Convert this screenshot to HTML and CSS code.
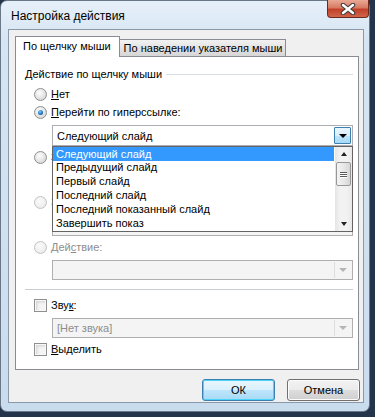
FILE: index.html
```html
<!DOCTYPE html>
<html lang="ru">
<head>
    <meta charset="UTF-8">
    <title>Настройка действия</title>
    <link rel="stylesheet" href="styles.css">
</head>
<body>
    <div class="window">
        <div class="titlebar">
            <span class="title">Настройка действия</span>
            <div class="close">
                <svg width="16" height="12" viewBox="0 0 16 12">
                    <path d="M3 2 L13 10 M13 2 L3 10" stroke="#3a3a3a" stroke-width="4.5" stroke-linecap="round"/>
                    <path d="M3 2 L13 10 M13 2 L3 10" stroke="#fff" stroke-width="2.5" stroke-linecap="round"/>
                </svg>
            </div>
        </div>
        <div class="client">
            <div class="tabs">
                <div class="tab active">По щелчку мыши</div>
                <div class="tab">По наведении указателя мыши</div>
            </div>
            <div class="panel">
                <div class="group-title"><span>Действие по щелчку мыши</span></div>

                <div class="row"><span class="radio"></span><span><u>Н</u>ет</span></div>
                <div class="row"><span class="radio checked"></span><span><u>П</u>ерейти по гиперссылке:</span></div>
                <div class="combo-wrap">
                    <div class="combo focus">
                        <span class="combo-text">Следующий слайд</span>
                        <span class="combo-btn"><span class="arrow"></span></span>
                    </div>
                    <div class="dropdown">
                        <ul class="items">
                            <li class="selected">Следующий слайд</li>
                            <li>Предыдущий слайд</li>
                            <li>Первый слайд</li>
                            <li>Последний слайд</li>
                            <li>Последний показанный слайд</li>
                            <li>Завершить показ</li>
                        </ul>
                        <div class="scrollbar">
                            <span class="sb-up"></span>
                            <span class="sb-thumb"><i></i><i></i><i></i></span>
                            <span class="sb-down"></span>
                        </div>
                    </div>
                </div>

                <div class="row next"><span class="radio"></span><span>З</span></div>
                <div class="combo disabled"><span class="combo-text"></span></div>
                <div class="row next"><span class="radio off"></span><span class="dim">З</span></div>
                <div class="combo disabled"><span class="combo-text"></span></div>

                <div class="row next"><span class="radio off"></span><span class="dim">Дей<u>с</u>твие:</span></div>
                <div class="combo disabled short">
                    <span class="combo-text"></span>
                    <span class="combo-btn"><span class="arrow"></span></span>
                </div>

                <div class="separator"></div>

                <div class="row check-row"><span class="check"></span><span>Зву<u>к</u>:</span></div>
                <div class="combo disabled short">
                    <span class="combo-text">[Нет звука]</span>
                    <span class="combo-btn"><span class="arrow"></span></span>
                </div>
                <div class="row next"><span class="check"></span><span><u>В</u>ыделить</span></div>
            </div>
            <div class="buttons">
                <div class="btn default">ОК</div>
                <div class="btn">Отмена</div>
            </div>
        </div>
    </div>
</body>
</html>
```

FILE: styles.css
```css
body {
    margin: 0;
    background: #24344a;
    font-family: "Liberation Sans", Arial, sans-serif;
    font-size: 11px;
    color: #000;
}
.window {
    width: 370px;
    height: 412px;
    box-sizing: border-box;
    border: 1px solid #6a7786;
    border-radius: 7px;
    background: linear-gradient(180deg, #e6f0f9 0, #d6e5f3 40px, #c9dcee 100%);
    padding: 0 5px 8px 7px;
    display: flex;
    flex-direction: column;
}
.titlebar {
    height: 28px;
    display: flex;
    justify-content: space-between;
    align-items: flex-start;
}
.title {
    padding: 8px 0 0 3px;
    font-size: 12px;
    color: #000;
}
.close {
    width: 42px;
    height: 18px;
    margin: -1px -5px 0 0;
    box-sizing: border-box;
    border: 1px solid #6b2a20;
    border-top: none;
    border-radius: 0 0 4px 4px;
    background: linear-gradient(180deg, #e9a996 0, #d77b63 45%, #c2402a 55%, #d2664a 100%);
    display: flex;
    align-items: center;
    justify-content: center;
}
.client {
    flex: 1;
    background: #f0f0f0;
    border: 1px solid #8a99aa;
    padding: 6px 3px 0 6px;
}
.tabs {
    display: flex;
    align-items: flex-end;
    height: 20px;
}
.tab {
    box-sizing: border-box;
    height: 17px;
    padding: 0 3px 0 4px;
    border: 1px solid #898c95;
    border-bottom: none;
    background: linear-gradient(180deg, #f2f2f2 0, #e3e3e3 50%, #d6d6d6 100%);
    display: flex;
    align-items: center;
    white-space: nowrap;
}
.tab.active {
    height: 21px;
    margin-bottom: -1px;
    padding: 0 8px 3px 7px;
    background: #fff;
    position: relative;
    z-index: 1;
}
.tab + .tab {
    margin-left: -1px;
}
.panel {
    width: 344px;
    height: 314px;
    box-sizing: border-box;
    border: 1px solid #898c95;
    background: #fff;
    padding: 10px 5px 0 9px;
}
.group-title {
    display: flex;
    align-items: center;
    height: 14px;
}
.group-title::after {
    content: "";
    flex: 1;
    height: 1px;
    background: #d5dfe5;
    margin-left: 4px;
}
.row {
    display: flex;
    align-items: center;
    height: 16px;
    margin: 2px 0 0 9px;
    gap: 4px;
}
.group-title + .row {
    margin-top: 5px;
}
.row.next {
    margin-top: 3px;
}
.check-row {
    margin-top: 7px;
}
u {
    text-decoration: underline;
    text-underline-offset: 1px;
}
.dim {
    color: #8d8d8d;
}
.radio {
    width: 13px;
    height: 13px;
    box-sizing: border-box;
    border-radius: 50%;
    border: 1px solid #8e8f8f;
    background: radial-gradient(circle at 40% 35%, #fdfdfd 0, #e6e6e6 50%, #cbcbcb 100%);
    display: flex;
    align-items: center;
    justify-content: center;
    flex: none;
}
.radio.checked::after {
    content: "";
    width: 5px;
    height: 5px;
    border-radius: 50%;
    background: radial-gradient(circle at 40% 35%, #7ed2ff 0, #1c6cb7 60%, #0b3f7a 100%);
}
.radio.off {
    border-color: #c3c3c3;
    background: radial-gradient(circle at 40% 35%, #fafafa 0, #efefef 60%, #e2e2e2 100%);
}
.check {
    width: 13px;
    height: 13px;
    box-sizing: border-box;
    border: 1px solid #8f8f8f;
    background: #f4f4f4;
    box-shadow: inset 0 0 0 1px #f8f8f8, inset 2px 2px 3px #d0d0d0;
    flex: none;
}
.combo-wrap {
    position: relative;
}
.combo {
    margin: 5px 0 0 27px;
    height: 21px;
    box-sizing: border-box;
    border: 1px solid #abadb3;
    background: #fff;
    display: flex;
    align-items: center;
    padding: 1px;
}
.combo.short {
    height: 20px;
}
.combo-text {
    flex: 1;
    padding-left: 3px;
}
.combo-btn {
    width: 17px;
    height: 100%;
    box-sizing: border-box;
    border-left: 1px solid #dedede;
    display: flex;
    align-items: center;
    justify-content: center;
}
.arrow {
    width: 0;
    height: 0;
    border-left: 4px solid transparent;
    border-right: 4px solid transparent;
    border-top: 4px solid #000;
}
.combo.focus .combo-btn {
    border: 1px solid #3c7fb1;
    border-radius: 1px;
    background: linear-gradient(180deg, #eaf6fd 0, #d9f0fc 50%, #bee6fd 51%, #a7d9f5 100%);
}
.combo.disabled {
    background: #f4f4f4;
    border-color: #afafaf;
    color: #8d8d8d;
}
.combo.disabled .arrow {
    border-top-color: #b5b5b5;
}
.dropdown {
    position: absolute;
    top: 100%;
    left: 27px;
    right: 0;
    height: 86px;
    box-sizing: border-box;
    border: 1px solid #646464;
    background: #fff;
    display: flex;
    z-index: 2;
}
.items {
    list-style: none;
    margin: 0;
    padding: 0;
    flex: 1;
}
.items li {
    height: 14px;
    line-height: 13px;
    padding-left: 3px;
    box-sizing: border-box;
    white-space: nowrap;
}
.items li.selected {
    background: #3399ff;
    color: #fff;
    border: 1px dotted #c47a3a;
    padding-left: 2px;
    line-height: 12px;
}
.scrollbar {
    width: 17px;
    margin-left: 1px;
    background: linear-gradient(90deg, #e5e5e5 0, #f2f2f2 30%, #f2f2f2 70%, #e8e8e8 100%);
    display: flex;
    flex-direction: column;
    align-items: center;
}
.sb-up, .sb-down {
    width: 0;
    height: 0;
    border-left: 3px solid transparent;
    border-right: 3px solid transparent;
    margin: 5px 0;
}
.sb-up {
    border-bottom: 4px solid #222;
}
.sb-down {
    border-top: 4px solid #222;
    margin-top: auto;
}
.sb-thumb {
    width: 15px;
    height: 24px;
    margin-top: 1px;
    box-sizing: border-box;
    border: 1px solid #979797;
    border-radius: 2px;
    background: linear-gradient(90deg, #f4f4f4 0, #e8e8e8 50%, #d6d6d6 100%);
    display: flex;
    flex-direction: column;
    justify-content: center;
    align-items: center;
    gap: 1px;
}
.sb-thumb i {
    width: 7px;
    height: 1px;
    background: #5a5a5a;
    box-shadow: 0 1px 0 #fff;
}
.separator {
    height: 1px;
    background: #c8cdd2;
    margin-top: 9px;
}
.buttons {
    display: flex;
    justify-content: flex-end;
    gap: 12px;
    margin: 9px 0 0 0;
}
.btn {
    width: 73px;
    height: 22px;
    box-sizing: border-box;
    border: 1px solid #707070;
    border-radius: 3px;
    background: linear-gradient(180deg, #f2f2f2 0, #ebebeb 50%, #dddddd 51%, #cfcfcf 100%);
    display: flex;
    align-items: center;
    justify-content: center;
    box-shadow: inset 0 0 0 1px #fcfcfc;
}
.btn.default {
    border-color: #3c7fb1;
    background: linear-gradient(180deg, #eaf6fd 0, #d9f0fc 50%, #bee6fd 51%, #a7d9f5 100%);
    box-shadow: inset 0 0 0 1px #48d4fb;
}
```
